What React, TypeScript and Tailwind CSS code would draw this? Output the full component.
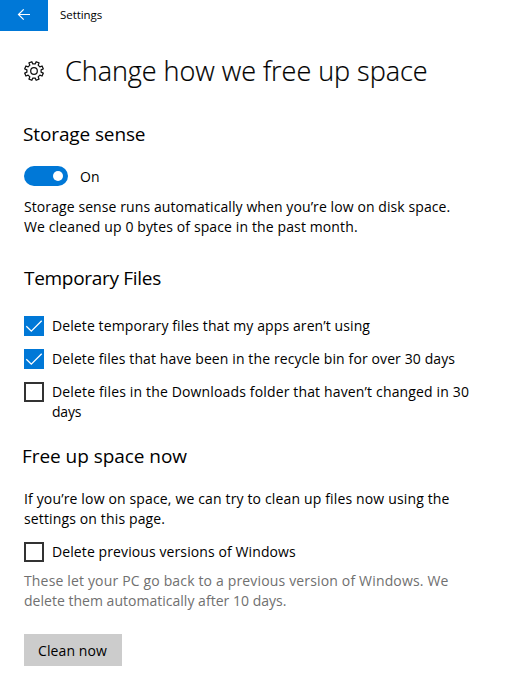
import React from "react"

// Eight teeth, with a notch pointing straight up
const GEAR_PATH = Array.from({ length: 8 }, (_, i) => {
	const at = (radius: number, degrees: number) => {
		const angle = ((i * 45 + 22.5 + degrees) * Math.PI) / 180
		return `${(10 + radius * Math.sin(angle)).toFixed(2)} ${
			(10 - radius * Math.cos(angle)).toFixed(2)
		}`
	}
	return `${i === 0 ? "M" : "L"}${at(7.2, -13)}L${at(9.5, -9.5)}L${
		at(9.5, 9.5)
	}L${at(7.2, 13)}`
}).join("") + "Z"

function GearIcon() {
	return (
		<svg
			width="20"
			height="20"
			viewBox="0 0 20 20"
			fill="none"
			stroke="#111"
			strokeWidth="1.25"
			strokeLinejoin="round"
		>
			<path d={GEAR_PATH} />
			<circle cx="10" cy="10" r="3.3" />
		</svg>
	)
}

function BackIcon() {
	return (
		<svg
			width="14"
			height="13"
			viewBox="0 0 14 13"
			fill="none"
			stroke="#fff"
			strokeWidth="1.2"
		>
			<path d="M13 5.5H1.5M6.7 .4L1.5 5.5L6.7 10.6" />
		</svg>
	)
}

interface LineProps {
	className: string
	children: React.ReactNode
}

function Line({ className, children }: LineProps) {
	return <span className={`block whitespace-nowrap ${className}`}>{children}</span>
}

interface CheckOptionProps {
	defaultChecked?: boolean
	className?: string
	children: React.ReactNode
}

function CheckOption(
	{ defaultChecked = false, className = "", children }: CheckOptionProps,
) {
	const [checked, setChecked] = React.useState(defaultChecked)

	return (
		<button
			type="button"
			role="checkbox"
			aria-checked={checked}
			onClick={() => setChecked(!checked)}
			className={`flex items-start gap-2 text-left ${className}`}
		>
			{checked
				? (
					<span className="size-5 shrink-0 bg-[#0078d7]">
						<svg
							width="20"
							height="20"
							viewBox="0 0 20 20"
							fill="none"
							stroke="#fff"
							strokeWidth="1.3"
						>
							<path d="M2.3 10.2L7.3 15.2L17.7 4.8" />
						</svg>
					</span>
				)
				: <span className="size-5 shrink-0 border-2 border-[#333] bg-white" />}
			<span>{children}</span>
		</button>
	)
}

export default function App() {
	const [enabled, setEnabled] = React.useState(true)

	return (
		<div className="h-[674px] w-[516px] overflow-hidden bg-white font-['Open_Sans','Noto_Sans',sans-serif] text-[14px] leading-5 text-black">
			<header className="flex h-[31px] items-center">
				<button
					type="button"
					aria-label="Back"
					className="flex h-[31px] w-12 items-center justify-center bg-[#0078d7]"
				>
					<BackIcon />
				</button>
				<span className="pb-0.5 pl-3 text-[11.5px] tracking-[-0.06px]">
					Settings
				</span>
			</header>

			<main className="pl-6">
				<div className="flex h-20 items-center gap-[21px]">
					<GearIcon />
					<h1 className="text-[27px] leading-9 font-light tracking-[-0.03px] whitespace-nowrap [-webkit-text-stroke:0.2px_#000]">
						Change how we free up space
					</h1>
				</div>

				<section className="pt-[9px]">
					<h2 className="-ml-px text-[19px] leading-7 tracking-[-0.12px]">
						Storage sense
					</h2>
					<div className="mt-[18px] flex h-5 items-center gap-3">
						<button
							type="button"
							role="switch"
							aria-checked={enabled}
							onClick={() => setEnabled(!enabled)}
							className={`flex h-5 w-11 items-center rounded-full px-[5px] ${
								enabled
									? "justify-end bg-[#0078d7]"
									: "justify-start bg-[#999]"
							}`}
						>
							<span className="size-2.5 rounded-full bg-white" />
						</button>
						<span className="pt-0.5">{enabled ? "On" : "Off"}</span>
					</div>
					<p className="mt-[11px]">
						<Line className="tracking-[0.09px]">
							Storage sense runs automatically when you’re low on disk space.
						</Line>
						<Line className="tracking-[0.12px]">
							We cleaned up 0 bytes of space in the past month.
						</Line>
					</p>
				</section>

				<section className="pt-[27px]">
					<h2 className="text-[19px] leading-7 tracking-[-0.3px]">
						Temporary Files
					</h2>
					<div className="mt-6 flex flex-col gap-[13px]">
						<CheckOption defaultChecked>
							<Line className="tracking-[0.1px]">
								Delete temporary files that my apps aren’t using
							</Line>
						</CheckOption>
						<CheckOption defaultChecked>
							<Line className="tracking-[0.11px]">
								Delete files that have been in the recycle bin for over 30 days
							</Line>
						</CheckOption>
						<CheckOption>
							<Line className="tracking-[0.15px]">
								Delete files in the Downloads folder that haven’t changed in 30
							</Line>
							<Line className="tracking-[-0.2px]">days</Line>
						</CheckOption>
					</div>
				</section>

				<section className="pt-5">
					<h2 className="-ml-0.5 text-[19px] leading-7 tracking-[-0.05px]">
						Free up space now
					</h2>
					<p className="mt-[19px]">
						<Line className="tracking-[0.15px]">
							If you’re low on space, we can try to clean up files now using the
						</Line>
						<Line className="tracking-[0.14px]">settings on this page.</Line>
					</p>
					<CheckOption className="mt-[13px]">
						<Line className="tracking-[0.1px]">
							Delete previous versions of Windows
						</Line>
					</CheckOption>
					<p className="mt-[9px] text-[#707070]">
						<Line className="tracking-[0.16px]">
							These let your PC go back to a previous version of Windows. We
						</Line>
						<Line className="tracking-[0.02px]">
							delete them automatically after 10 days.
						</Line>
					</p>
					<button
						type="button"
						className="mt-[23px] flex h-8 w-[98px] items-center bg-[#ccc] pt-0.5 pl-3.5 tracking-[0.1px] whitespace-nowrap"
					>
						Clean now
					</button>
				</section>
			</main>
		</div>
	)
}
